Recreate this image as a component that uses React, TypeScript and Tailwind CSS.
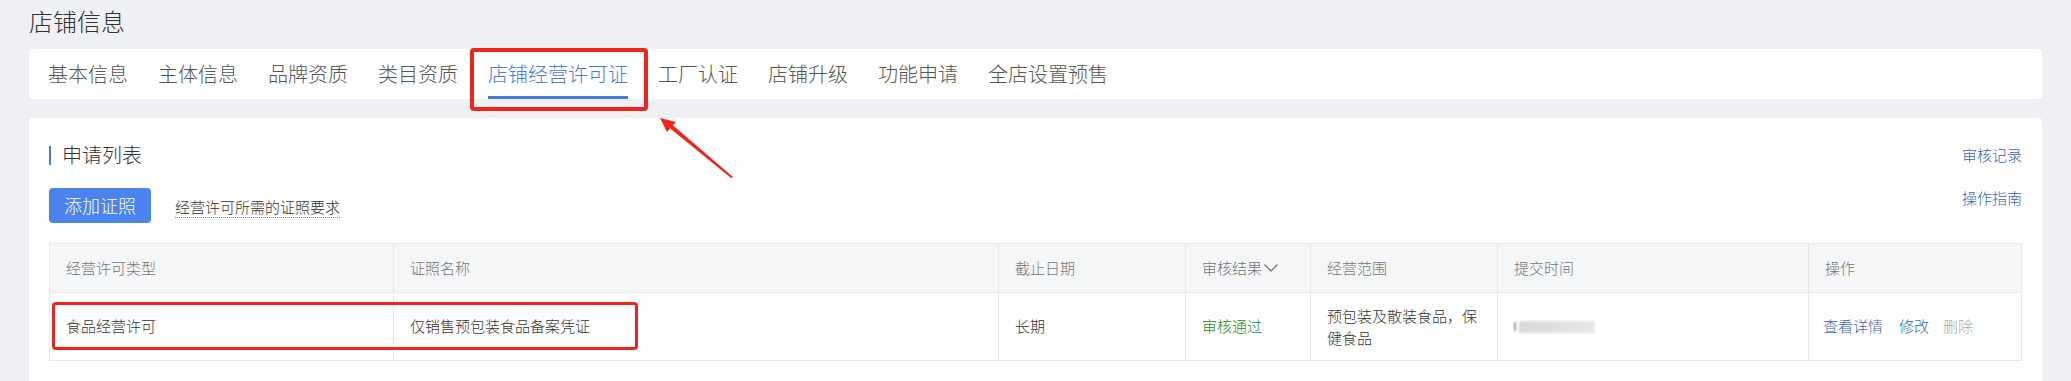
const TABS = ["基本信息", "主体信息", "品牌资质", "类目资质", "店铺经营许可证", "工厂认证", "店铺升级", "功能申请", "全店设置预售"];
const ACTIVE = "店铺经营许可证";

const COLS = ["经营许可类型", "证照名称", "截止日期", "审核结果", "经营范围", "提交时间", "操作"];

export default function App() {
  return (
    <div className="relative w-[2071px] h-[381px] overflow-hidden bg-[#eff0f3] px-[29px] font-['Noto_Sans_CJK_SC',sans-serif] font-light text-[#333]">
      {/* page title */}
      <div className="h-[49px] pt-[4px] text-[24px] leading-[34px] text-[#333]">店铺信息</div>

      {/* tabs */}
      <div className="flex h-[50px] gap-[30px] rounded-[4px] bg-white pl-[19px]">
        {TABS.map((t) => (
          <div
            key={t}
            className={`relative flex h-full items-center text-[20px] leading-[26px] ${t === ACTIVE ? "text-[#4a7bd6]" : "text-[#555]"}`}
          >
            {t}
            {t === ACTIVE && <div className="absolute bottom-0 left-0 right-0 h-[3px] bg-[#4a7bd6]" />}
          </div>
        ))}
      </div>

      {/* card */}
      <div className="mt-[19px] h-[300px] rounded-[4px] bg-white px-[20px] pt-[26px]">
        <div className="flex h-[22px] items-center justify-between">
          <div className="flex items-center">
            <div className="h-[19px] w-[2px] bg-[#4a7bd6]" />
            <span className="ml-[11px] text-[20px] leading-[22px] text-[#333]">申请列表</span>
          </div>
          <span className="text-[15px] leading-[20px] text-[#3a64b5]">审核记录</span>
        </div>

        <div className="mt-[22px] flex items-start justify-between">
          <div className="flex items-center">
            <button className="h-[35px] w-[102px] rounded-[4px] bg-[#4b84ef] text-[18px] leading-[35px] text-white">添加证照</button>
            <span className="ml-[24px] mt-[4px] border-b border-dotted border-[#888] text-[15px] leading-[20px] text-[#333]">
              经营许可所需的证照要求
            </span>
          </div>
          <span className="text-[15px] leading-[20px] text-[#3a64b5]">操作指南</span>
        </div>

        {/* table */}
        <div className="mt-[20px] border border-[#e8e9eb] text-[15px]">
          <div className="grid h-[49px] grid-cols-[343px_605px_187px_125px_187px_311px_214px] border-b border-[#e8e9eb] bg-[#f5f6f8] text-[#777]">
            {COLS.map((c, i) => (
              <div key={c} className={`flex items-center pl-[16px] ${i > 0 ? "border-l border-[#e8e9eb]" : ""}`}>
                {c}
                {c === "审核结果" && (
                  <svg width="16" height="10" viewBox="0 0 16 10" className="ml-[1px]">
                    <polyline points="1.5,1.5 8,8 14.5,1.5" fill="none" stroke="#777" strokeWidth="1.3" />
                  </svg>
                )}
              </div>
            ))}
          </div>
          <div className="grid h-[67px] grid-cols-[343px_605px_187px_125px_187px_311px_214px] text-[#333]">
            <div className="flex items-center pl-[16px]">食品经营许可</div>
            <div className="flex items-center border-l border-[#e8e9eb] pl-[16px]">仅销售预包装食品备案凭证</div>
            <div className="flex items-center border-l border-[#e8e9eb] pl-[16px]">长期</div>
            <div className="flex items-center border-l border-[#e8e9eb] pl-[16px] text-[#1e8a23]">审核通过</div>
            <div className="flex items-center border-l border-[#e8e9eb] pl-[16px]">
              <div className="w-[152px] leading-[22px]">预包装及散装食品，保健食品</div>
            </div>
            <div className="flex items-center border-l border-[#e8e9eb] pl-[16px]">
              <div className="flex h-[12px] w-[81px] items-center blur-[1px]">
                <div className="h-[9px] w-[2px] bg-[#999]" />
                <div className="ml-[3px] h-full flex-1 bg-gradient-to-r from-[#dadada] via-[#e0e0e0] to-[#e8e8e8]" />
              </div>
            </div>
            <div className="flex items-center gap-[17px] border-l border-[#e8e9eb] pl-[14px]">
              <span className="text-[#3a64b5]">查看详情</span>
              <span className="-ml-[1px] text-[#3a64b5]">修改</span>
              <span className="-ml-[3px] text-[#aaa]">删除</span>
            </div>
          </div>
        </div>
      </div>

      {/* annotations */}
      <div className="pointer-events-none absolute left-[470px] top-[48px] h-[63px] w-[178px] rounded-[4px] border-[4px] border-[#f0241b]" />
      <div className="pointer-events-none absolute left-[52px] top-[302px] h-[48px] w-[586px] rounded-[4px] border-[3px] border-[#f0241b]" />
      <svg className="pointer-events-none absolute left-0 top-0" width="2071" height="381">
        <polygon points="733,177 731,178 666,125 669,122" fill="#f0241b" />
        <polygon points="660,118 676,122 667,132" fill="#f0241b" />
      </svg>
    </div>
  );
}
